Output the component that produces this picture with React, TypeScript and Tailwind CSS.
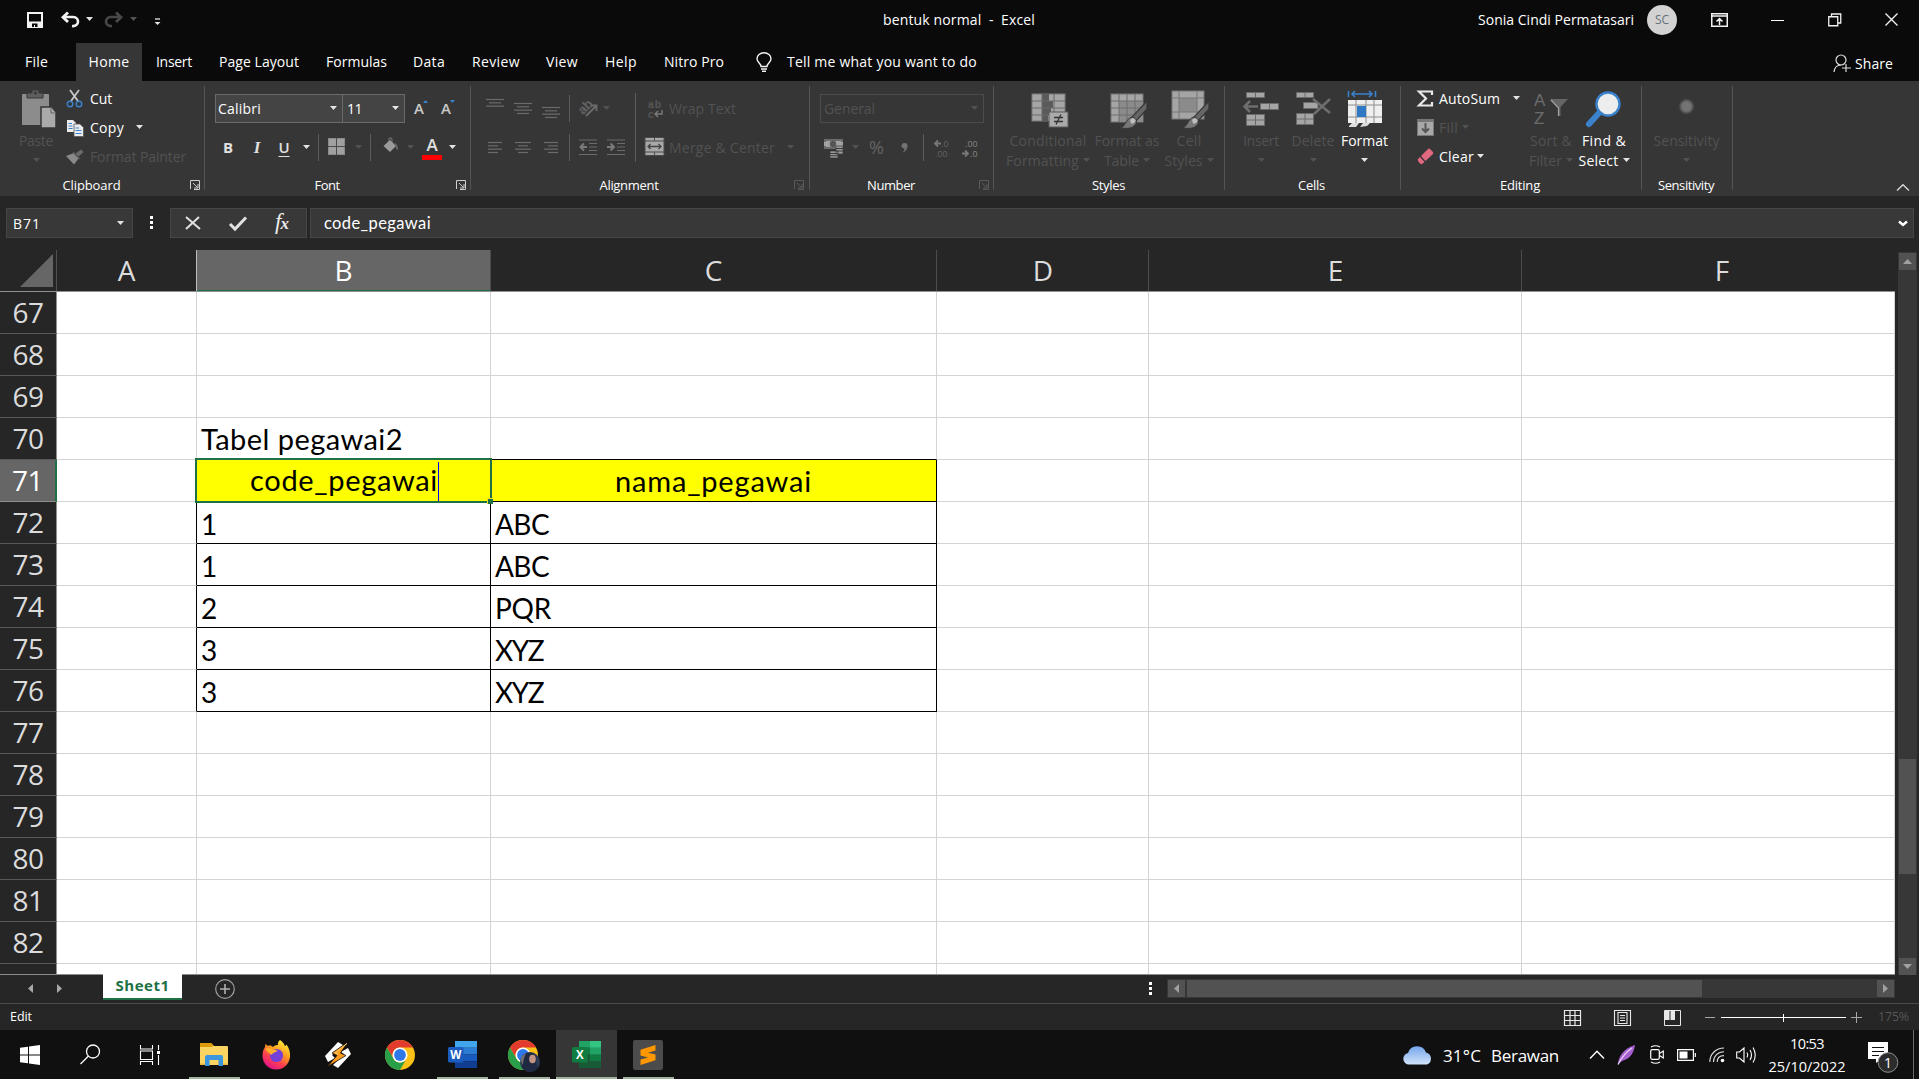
import React, { useLayoutEffect, useRef, useState } from "react";

/* ---------- text that settles into a given width ---------- */
function T({ w, children, className = "" }: { w: number; children: string; className?: string }) {
  const ref = useRef<HTMLSpanElement>(null);
  const [spacing, setSpacing] = useState(0);
  useLayoutEffect(() => {
    const el = ref.current;
    if (!el) return;
    el.style.letterSpacing = "0px";
    const natural = el.getBoundingClientRect().width;
    setSpacing((w - natural) / Math.max(1, children.length));
  }, [w, children]);
  return (
    <span ref={ref} className={"inline-block shrink-0 whitespace-pre " + className} style={{ letterSpacing: `${spacing}px` }}>
      {children}
    </span>
  );
}

type SvgProps = { w: number; h: number; className?: string; children: React.ReactNode };
function S({ w, h, className = "", children }: SvgProps) {
  return (
    <svg width={w} height={h} viewBox={`0 0 ${w} ${h}`} fill="none" className={"shrink-0 overflow-visible " + className}>
      {children}
    </svg>
  );
}

function Caret({ off = false, className = "" }: { off?: boolean; className?: string }) {
  return (
    <S w={7} h={4} className={className}>
      <path d="M0 0H7L3.5 4Z" fill={off ? "#525252" : "#e4e4e4"} />
    </S>
  );
}

const Bar = ({ className = "" }: { className?: string }) => <div className={"w-px shrink-0 bg-[#5c5c5c] " + className} />;

/* ---------- title bar ---------- */
function TitleBar() {
  return (
    <header className="flex h-[43px] items-center pb-[4px]">
      <S w={16} h={16} className="ml-[27px]">
        <path d="M1 1H15V15H1Z" stroke="#f2f2f2" strokeWidth="2" />
        <path d="M2 9.5H14V15H2Z" fill="#f2f2f2" />
        <path d="M5 11.5H10.5V15H8V13H7V15H5Z" fill="#0a0a0a" />
      </S>
      <S w={19} h={16} className="ml-[18px]">
        <path d="M2 5H12C16 5 17 8 17 9.500C17 12.500 14.500 14.500 11 14" stroke="#f2f2f2" strokeWidth="2.600" />
        <path d="M7 0.500L2 5.200L7 10" stroke="#f2f2f2" strokeWidth="2.800" />
      </S>
      <Caret className="ml-[6px] -mt-[1px]" />
      <S w={19} h={16} className="ml-[11px]">
        <path d="M17 5H7C3 5 2 8 2 9.500C2 12.500 4.500 14.500 8 14" stroke="#484848" strokeWidth="2.600" />
        <path d="M12 0.500L17 5.200L12 10" stroke="#484848" strokeWidth="2.800" />
      </S>
      <Caret off className="ml-[7px] -mt-[1px]" />
      <S w={7} h={8} className="ml-[17px] mt-[4px]">
        <path d="M1 1H6" stroke="#e4e4e4" strokeWidth="1.300" />
        <path d="M0.500 4H6.500L3.500 7Z" fill="#e4e4e4" />
      </S>
      <T w={152} className="ml-[722px]">bentuk normal  -  Excel</T>
      <T w={156} className="ml-[443px]">Sonia Cindi Permatasari</T>
      <div className="ml-[13px] flex h-[30px] w-[30px] items-center justify-center rounded-full bg-[#d2d2d2] text-[12px] text-[#667078]">SC</div>
      <S w={17} h={14} className="ml-[34px]">
        <path d="M0.750 0.750H16.250V13.250H0.750ZM1 3H16M8.500 12V6M5.500 8.500L8.500 5.500L11.500 8.500" stroke="#f2f2f2" strokeWidth="1.500" />
      </S>
      <div className="ml-[43px] mt-[2px] h-px w-[13px] bg-white" />
      <S w={14} h={14} className="ml-[44px]">
        <path d="M0.750 3.750H9.750V12.750H0.750ZM3.500 3.500V1H12.750V10H10" stroke="#f2f2f2" strokeWidth="1.300" />
      </S>
      <S w={13} h={13} className="ml-[43px]">
        <path d="M0.500 0.500L12.500 12.500M12.500 0.500L0.500 12.500" stroke="#f2f2f2" strokeWidth="1.400" />
      </S>
    </header>
  );
}

/* ---------- ribbon tabs ---------- */
function Tabs() {
  return (
    <nav className="flex h-[38px] items-center [&>span]:-mt-[2px]">
      <T w={23} className="ml-[25px]">File</T>
      <div className="ml-[28px] flex h-full w-[66px] items-center justify-center bg-[#363636] pb-[2px]">
        <T w={41}>Home</T>
      </div>
      <T w={36} className="ml-[14px]">Insert</T>
      <T w={80} className="ml-[27px]">Page Layout</T>
      <T w={61} className="ml-[27px]">Formulas</T>
      <T w={32} className="ml-[26px]">Data</T>
      <T w={48} className="ml-[27px]">Review</T>
      <T w={32} className="ml-[26px]">View</T>
      <T w={32} className="ml-[27px]">Help</T>
      <T w={60} className="ml-[27px]">Nitro Pro</T>
      <S w={16} h={20} className="ml-[32px]">
        <path d="M5 14.500C5 11.500 1 10.500 1 6.800C1 3.500 4 0.800 8 0.800S15 3.500 15 6.800C15 10.500 11 11.500 11 14.500Z" stroke="#f2f2f2" strokeWidth="1.400" />
        <path d="M5 17H11M6 19.200H10" stroke="#f2f2f2" strokeWidth="1.600" />
      </S>
      <T w={190} className="ml-[15px]">Tell me what you want to do</T>
      <div className="mt-[3px] ml-[856px] flex items-center">
        <S w={18} h={19}>
          <circle cx="8" cy="6" r="5" stroke="#dcdcdc" strokeWidth="1.200" />
          <path d="M1 18C1.500 13.500 4.500 11 8 11M13 10V18M9 14H18" stroke="#dcdcdc" strokeWidth="1.200" />
        </S>
        <T w={38} className="ml-[4px]">Share</T>
      </div>
    </nav>
  );
}

/* ---------- ribbon pieces ---------- */
function Group({ cls, label, lw, labelCls, launch, launchOff, children }: {
  cls: string; label: string; lw: number; labelCls: string; launch?: boolean; launchOff?: boolean; children: React.ReactNode;
}) {
  const c = launchOff ? "#5a5a5a" : "#cfcfcf";
  return (
    <>
      <section className={"flex h-[115px] shrink-0 flex-col " + cls}>
        <div className="h-[93px]">{children}</div>
        <div className="flex h-[22px] items-center text-[13px]">
          <div className={"flex shrink-0 justify-center pt-[2px] " + labelCls}>
            <T w={lw}>{label}</T>
          </div>
          {launch && (
            <S w={10} h={10} className="ml-[7px]">
              <path d="M0.500 9V0.500H9.500V9.500H4M3 3L7.500 7.500M8 4V8H4" stroke={c} />
            </S>
          )}
        </div>
      </section>
      <Bar className="mt-[5px] h-[104px] bg-[#545454]" />
    </>
  );
}

function Big({ cls, icon, a, aw, b, bw, off = true }: {
  cls: string; icon: React.ReactNode; a: string; aw: number; b?: string; bw?: number; off?: boolean;
}) {
  return (
    <div className={"flex shrink-0 flex-col items-center leading-5 " + (off ? "text-[#525252] " : "") + cls}>
      <div className="flex h-[50px] items-start">{icon}</div>
      <T w={aw} className="h-5">{a}</T>
      <div className="flex h-5 items-center gap-[4px]">
        {b && <T w={bw || 0}>{b}</T>}
        <Caret off={off} className="-mt-[2px]" />
      </div>
    </div>
  );
}

function Lines({ rows, className = "" }: { rows: [number, number][]; className?: string }) {
  return (
    <S w={18} h={14} className={"self-start " + className}>
      {rows.map(([x, w], i) => (
        <path key={i} d={`M${x} ${1.5 + i * 3.33}h${w}`} stroke="#6b6b6b" strokeWidth="1.200" />
      ))}
    </S>
  );
}

const Money = () => (
  <S w={20} h={20} className="ml-[14px]">
    <rect x="0" y="1" width="19" height="10" fill="#6b6b6b" />
    <path d="M2 3H17V9H2Z" fill="#a2a2a2" />
    <path d="M0 4V8H2V4ZM17 4V8H19V4Z" fill="#a2a2a2" />
    <circle cx="9" cy="6" r="3.200" fill="#555" />
    <path d="M12 8H19V16H12ZM6 13H14V20H6Z" fill="#9a9a9a" stroke="#363636" strokeWidth=".7" />
    <path d="M12 10.500H19M12 13H19M6 15.500H14M6 17.700H14" stroke="#3a3a3a" />
  </S>
);

const Brush = ({ x, y }: { x: number; y: number }) => (
  <g transform={`translate(${x} ${y})`}>
    <path d="M27 0V8L16 20L11 17Z" fill="#666" stroke="#363636" strokeWidth="1.200" />
    <path d="M0 27C5 27 6 17 12 16C17 17 18 22 14 25C11 28 5 27.500 0 27Z" fill="#777" stroke="#363636" />
    <path d="M10 19C12 16.500 15 17 15.500 19.500C15 22 13 23 11 22.500Z" fill="#bdbdbd" />
  </g>
);

const Conditional = () => (
  <S w={38} h={36} className="mt-[12px] ml-[3px]">
    <rect x="1" y="1" width="33" height="27" fill="#a5a5a5" stroke="#7b7b7b" />
    <path d="M11 1H18V8H22V15H20V22H17V28H11Z" fill="#5a5a5a" />
    <path d="M1 8H34M1 15H34M1 22H34M11 1V28M23 1V28" stroke="#6a6a6a" />
    <rect x="18" y="19" width="19" height="15" fill="#aaa" stroke="#5a5a5a" />
    <path d="M23 24.500H32M23 28.500H32M30 21.500L25 31.500" stroke="#333" strokeWidth="1.300" />
  </S>
);
const TableIcon = () => (
  <S w={38} h={36} className="mt-[12px] ml-[3px]">
    <rect x="1" y="1" width="32" height="28" fill="#a5a5a5" stroke="#777" />
    <path d="M9 8H33V29H9Z" fill="#8b8b8b" />
    <path d="M1 8H33M1 15H33M1 22H33M9 1V29M17 1V29M25 1V29" stroke="#6c6c6c" />
    <Brush x={10} y={8} />
  </S>
);
const CellStyle = () => (
  <S w={38} h={39} className="mt-[9px] ml-[1px]">
    <rect x="1" y="1" width="32" height="28" fill="#a5a5a5" stroke="#777" />
    <rect x="8" y="8" width="18" height="14" fill="#8b8b8b" />
    <path d="M1 8H33M1 22H33M8 1V29M26 1V29" stroke="#777" />
    <Brush x={11} y={11} />
  </S>
);
const InsertIcon = () => (
  <S w={36} h={36} className="mt-[10px]">
    <path d="M3.500 1.500H21.500V6.500H3.500ZM12.500 1.500V6.500M17.500 12.500H35.500V18.500H17.500ZM26.500 12.500V18.500M3.500 23.500H21.500V34.500H3.500ZM12.500 23.500V34.500M3.500 29H21.500" fill="#a5a5a5" stroke="#6a6a6a" />
    <path d="M15 15.500H2M7 10L1.500 15.500L7 21" stroke="#6e6e6e" strokeWidth="2.500" />
  </S>
);
const DeleteIcon = () => (
  <S w={36} h={36} className="mt-[10px]">
    <path d="M1.500 1.500H18.500V6.500H1.500ZM10 1.500V6.500M8.500 11.500H23V17.500H8.500ZM1.500 22.500H18.500V33.500H1.500ZM10 22.500V33.500M1.500 28H18.500" fill="#a5a5a5" stroke="#6a6a6a" />
    <path d="M18 8L35 22M35 8L19 23" stroke="#6e6e6e" strokeWidth="2.500" />
  </S>
);
const FormatIcon = () => (
  <S w={36} h={39} className="mt-[8px]">
    <path d="M1.500 2V8M28.500 2V8M5 5H25M8 2L5 5L8 8M22 2L25 5L22 8" stroke="#3b82cc" strokeWidth="1.600" />
    <rect x="1" y="11" width="34" height="23" fill="#efefef" />
    <path d="M1 16H35M1 28H35M9 11V34M19 11V34M27 11V34" stroke="#8e8e8e" />
    <rect x="10" y="17" width="9" height="11" fill="#2f78c4" />
    <path d="M2 37L5 34H12L9 38H2ZM13 38L16 34H23L20 37Z" fill="#dedede" />
  </S>
);

/* ---------- ribbon ---------- */
function Ribbon() {
  return (
    <div className="flex h-[115px] bg-[#363636] text-white">
      <Group cls="w-[204px]" label="Clipboard" lw={58} labelCls="w-[183px]" launch>
        <div className="flex">
          <div className="ml-[15px] flex w-[42px] flex-col items-center text-[#525252]">
            <S w={36} h={41} className="mt-[8px] ml-[6px]">
              <path d="M1 6Q1 5 2 5H27Q28 5 28 6V36H1Z" fill="#8c8c8c" />
              <path d="M6 4H11V2Q11 1 12 1H17Q18 1 18 2V4H22V9H6Z" fill="#5e5e5e" stroke="#363636" />
              <circle cx="14.500" cy="4" r="1.500" fill="#363636" />
              <path d="M20 18H31L35 23V39H20Z" fill="#aaa" stroke="#363636" strokeWidth="1.500" />
              <path d="M30 18V24H35" stroke="#666" />
            </S>
            <T w={34} className="mt-[1px] leading-5">Paste</T>
            <Caret off className="mt-[7px]" />
          </div>
          <div className="ml-[9px] mt-[3px] flex flex-col">
            <div className="flex h-[29px] items-center">
              <S w={18} h={19}>
                <path d="M4 1L12 12M13 1L5 12" stroke="#c8c8c8" strokeWidth="1.800" />
                <circle cx="4" cy="15" r="2.800" stroke="#3b82cc" strokeWidth="1.400" />
                <circle cx="13" cy="15" r="2.800" stroke="#3b82cc" strokeWidth="1.400" />
              </S>
              <T w={22} className="ml-[6px]">Cut</T>
            </div>
            <div className="flex h-[29px] items-center">
              <S w={18} h={18}>
                <path d="M1 1H7L10 4V13H1Z" fill="#ececec" />
                <path d="M8 5H14L17.500 8.500V17.500H8Z" fill="#ececec" stroke="#555" strokeWidth=".8" />
                <path d="M2.500 4.500H6M2.500 7H6.500M2.500 9.500H6.500M9.500 9H13M9.500 11.500H15.500M9.500 14.500H15.500" stroke="#3b82cc" strokeWidth="1.200" />
              </S>
              <T w={34} className="ml-[6px]">Copy</T>
              <Caret className="ml-[12px] -mt-[2px]" />
            </div>
            <div className="flex h-[29px] items-center text-[#525252]">
              <S w={18} h={16}>
                <path d="M9 5L15 0.500L17.500 3L12 8Z" fill="#6b6b6b" />
                <path d="M0 7L8 4L13 9L8 15.500Z" fill="#8a8a8a" />
                <path d="M7 3L14 10" stroke="#555" strokeWidth="1.500" />
              </S>
              <T w={96} className="ml-[6px]">Format Painter</T>
            </div>
          </div>
        </div>
      </Group>

      <Group cls="w-[265px]" label="Font" lw={25} labelCls="w-[244px]" launch>
        <div className="ml-[10px] mt-[13px] flex h-[29px] items-center">
          <div className="flex h-[29px] w-[128px] items-center justify-between border border-[#6a6a6a] bg-[#444] pl-[2px] pr-[5px]">
            <T w={43}>Calibri</T>
            <Caret className="-mt-[2px]" />
          </div>
          <div className="-ml-px flex h-[29px] w-[63px] items-center justify-between border border-[#6a6a6a] bg-[#444] pl-[4px] pr-[5px]">
            <T w={15}>11</T>
            <Caret className="-mt-[2px]" />
          </div>
          <div className="ml-[9px] flex w-[14px] items-end">
            <span className="text-[15px] font-semibold text-[#c8c8c8]">A</span>
            <S w={5} h={3} className="mb-[17px] -ml-[1px]"><path d="M0 3H5L2.500 0Z" fill="#3b82cc" /></S>
          </div>
          <div className="ml-[13px] flex w-[14px] items-end">
            <span className="text-[15px] font-semibold text-[#c8c8c8]">A</span>
            <S w={5} h={3} className="mb-[17px] -ml-[1px]"><path d="M0 0H5L2.500 3Z" fill="#3b82cc" /></S>
          </div>
        </div>
        <div className="ml-[17px] mt-[11px] flex h-[27px] items-center text-[16px] text-[#e0e0e0]">
          <b className="w-[12px] text-center text-[15px]">B</b>
          <i className="ml-[17px] w-[12px] text-center font-['Liberation_Serif'] text-[17px] font-bold">I</i>
          <span className="ml-[15px] w-[12px] text-center text-[15px] font-semibold underline underline-offset-3">U</span>
          <Caret className="ml-[13px] -mt-[2px]" />
          <Bar className="ml-[8px] h-[27px]" />
          <S w={17} h={17} className="ml-[9px] -mt-[2px]">
            <rect x="0.500" y="0.500" width="16" height="16" fill="#a0a0a0" stroke="#8a8a8a" />
            <path d="M8.500 0V17M0 8.500H17" stroke="#4a4a4a" />
          </S>
          <Caret off className="ml-[10px] -mt-[2px]" />
          <Bar className="ml-[8px] h-[27px]" />
          <S w={16} h={16} className="ml-[12px] -mt-[5px]">
            <path d="M6 7V2Q6 1 7.500 1Q9 1 9 3V6" stroke="#6b6b6b" strokeWidth="1.300" />
            <path d="M7 3L13 9L7 15L0.500 9Z" fill="#9a9a9a" />
            <path d="M11 6Q15 6 15 13Q13 13 12.500 9Z" fill="#666" />
          </S>
          <Caret off className="ml-[8px] -mt-[2px]" />
          <div className="ml-[8px] flex w-[20px] flex-col items-center">
            <span className="h-[19px] text-[17px] leading-[18px] font-semibold">A</span>
            <div className="h-[5px] w-[20px] bg-[#ff0000]" />
          </div>
          <Caret className="ml-[7px] -mt-[2px]" />
        </div>
      </Group>

      <Group cls="w-[338px] text-[#fff]" label="Alignment" lw={59} labelCls="w-[316px]" launch launchOff>
        <div className="flex text-[#525252]">
          <div className="ml-[15px] flex w-[149px] flex-col">
            <div className="mt-[13px] flex h-[29px] items-center">
              <Lines rows={[[0, 18], [3, 12], [0, 18]]} className="mt-[4px]" />
              <Lines rows={[[0, 18], [3, 12], [0, 18], [3, 12]]} className="ml-[10px] mt-[8px]" />
              <Lines rows={[[0, 18], [3, 12], [0, 18], [3, 12]]} className="ml-[10px] mt-[12px]" />
              <Bar className="ml-[9px] h-[27px]" />
              <S w={20} h={20} className="ml-[9px] -mt-[2px]">
                <text x="0" y="14" fontSize="13" fontFamily="Liberation Sans, sans-serif" fontWeight="600" fill="#646464" transform="rotate(-45 6 11)">ab</text>
                <path d="M7 18L17 8M12 7.500H17.500V13" stroke="#6b6b6b" strokeWidth="1.800" />
              </S>
              <Caret off className="ml-[4px] -mt-[2px]" />
            </div>
            <div className="mt-[11px] flex h-[27px] items-center">
              <Lines rows={[[2, 14], [2, 10], [2, 14], [2, 10]]} className="mt-[7px]" />
              <Lines rows={[[1, 16], [4, 10], [1, 16], [4, 10]]} className="ml-[10px] mt-[7px]" />
              <Lines rows={[[2, 14], [6, 10], [2, 14], [6, 10]]} className="ml-[10px] mt-[7px]" />
              <Bar className="ml-[9px] h-[27px]" />
              <S w={18} h={17} className="ml-[9px]">
                <path d="M0 1H18M10 4.500H18M10 8H18M10 11.500H18M0 15.500H18" stroke="#6b6b6b" />
                <path d="M8 8H2M5 4.500L1.500 8L5 11.500" stroke="#7a7a7a" strokeWidth="2" />
              </S>
              <S w={18} h={17} className="ml-[10px]">
                <path d="M0 1H18M10 4.500H18M10 8H18M10 11.500H18M0 15.500H18" stroke="#6b6b6b" />
                <path d="M0 8H6M3.500 4.500L7 8L3.500 11.500" stroke="#7a7a7a" strokeWidth="2" />
              </S>
            </div>
          </div>
          <Bar className="mt-[12px] h-[69px]" />
          <div className="flex flex-col">
            <div className="mt-[13px] flex h-[29px] items-center">
              <S w={18} h={18} className="ml-[11px]">
                <text x="1" y="8" fontSize="10.500" fontFamily="Liberation Sans, sans-serif" fontWeight="600" letterSpacing="1" fill="#565656">ab</text>
                <text x="1" y="18" fontSize="10.500" fontFamily="Liberation Sans, sans-serif" fontWeight="600" fill="#565656">c</text>
                <path d="M15 10V14H8M11 11L8 14L11 17" stroke="#7a7a7a" strokeWidth="1.400" />
              </S>
              <T w={67} className="ml-[4px]">Wrap Text</T>
            </div>
            <div className="mt-[11px] flex h-[27px] items-center">
              <S w={19} h={19} className="ml-[9px] -mt-[2px]">
                <rect width="19" height="19" fill="#a8a8a8" />
                <path d="M0 4H19M0 15H19M9.500 0V4M9.500 15V19M0 .5H19V18.500H0Z" stroke="#4a4a4a" />
                <path d="M3 9.500H16M5.500 7L3 9.500L5.500 12M13.500 7L16 9.500L13.500 12" stroke="#444" strokeWidth="1.300" />
              </S>
              <T w={106} className="ml-[5px]">Merge &amp; Center</T>
              <Caret off className="ml-[12px] -mt-[2px]" />
            </div>
          </div>
        </div>
      </Group>

      <Group cls="w-[183px]" label="Number" lw={48} labelCls="w-[162px]" launch launchOff>
        <div className="ml-[10px] mt-[13px] flex h-[29px] w-[164px] items-center justify-between border border-[#4c4c4c] pl-[3px] pr-[5px] text-[#525252]">
          <T w={51}>General</T>
          <Caret off className="-mt-[2px]" />
        </div>
        <div className="mt-[11px] flex h-[27px] items-center text-[#646464]">
          <Money />
          <Caret off className="ml-[8px] -mt-[2px]" />
          <span className="ml-[10px] w-[16px] text-[18px]">%</span>
          <S w={7} h={10} className="ml-[16px]">
            <path d="M0.500 3A3 3 0 0 1 6.500 3C6.500 6 4 9 1.500 9.500C3 8 3.500 7 3.500 5.500C1.500 5.500 .5 4.500 .5 3Z" fill="#737373" />
          </S>
          <Bar className="ml-[15px] h-[27px]" />
          <S w={16} h={18} className="ml-[10px]">
            <path d="M7 4.500H1M4 1.500L1 4.500L4 7.500" stroke="#777" strokeWidth="1.800" />
            <text x="7" y="8" fontSize="9" fontFamily="Liberation Sans, sans-serif" fill="#606060">.0</text>
            <text x="1" y="18" fontSize="9" fontFamily="Liberation Sans, sans-serif" fill="#606060">.00</text>
          </S>
          <S w={16} h={18} className="ml-[12px]">
            <text x="3" y="8" fontSize="9" fontFamily="Liberation Sans, sans-serif" fill="#808080">.00</text>
            <path d="M0 14.500H6M3 11.500L6 14.500L3 17.500" stroke="#777" strokeWidth="1.800" />
            <text x="8" y="18" fontSize="9" fontFamily="Liberation Sans, sans-serif" fill="#808080">.0</text>
          </S>
        </div>
      </Group>

      <Group cls="w-[230px]" label="Styles" lw={33} labelCls="w-[229px]">
        <div className="flex">
          <Big cls="ml-[12px] w-[84px]" icon={<Conditional />} a="Conditional" aw={77} b="Formatting" bw={73} />
          <Big cls="ml-[1px] w-[72px]" icon={<TableIcon />} a="Format as" aw={65} b="Table" bw={35} />
          <Big cls="w-[52px]" icon={<CellStyle />} a="Cell" aw={25} b="Styles" bw={38} />
        </div>
      </Group>

      <Group cls="w-[175px]" label="Cells" lw={27} labelCls="w-[173px]">
        <div className="flex">
          <Big cls="ml-[11px] w-[50px]" icon={<InsertIcon />} a="Insert" aw={36} />
          <Big cls="ml-[2px] w-[50px]" icon={<DeleteIcon />} a="Delete" aw={43} />
          <Big cls="w-[53px]" icon={<FormatIcon />} a="Format" aw={47} off={false} />
        </div>
      </Group>

      <Group cls="w-[240px]" label="Editing" lw={40} labelCls="w-[238px]">
        <div className="flex">
          <div className="ml-[16px] mt-[3px] flex w-[111px] flex-col">
            <div className="flex h-[29px] items-center">
              <S w={17} h={18}>
                <path d="M15 5V1.500H2L9 8.500L2 15.500H15V12" stroke="#e8e8e8" strokeWidth="2.200" />
              </S>
              <T w={61} className="ml-[5px]">AutoSum</T>
              <Caret className="ml-[13px] -mt-[2px]" />
            </div>
            <div className="flex h-[29px] items-center text-[#525252]">
              <S w={17} h={17}>
                <rect width="17" height="17" fill="#777" />
                <rect x="1" y="3" width="15" height="13" fill="#a8a8a8" />
                <path d="M8.500 4V13M5 9.500L8.500 13L12 9.500" stroke="#555" strokeWidth="2" />
              </S>
              <T w={19} className="ml-[5px]">Fill</T>
              <Caret off className="ml-[4px] -mt-[2px]" />
            </div>
            <div className="flex h-[29px] items-center">
              <S w={17} h={17}>
                <path d="M11 1Q12 0 13 1L16 4Q16.500 5 16 6L8.500 13L4 8Z" fill="#e0687f" />
                <path d="M3 9L7.500 14L5 16Q4 16.500 3 15.500L1 13Q.5 12 1 11Z" fill="#e0687f" />
              </S>
              <T w={35} className="ml-[5px]">Clear</T>
              <Caret className="ml-[3px] -mt-[2px]" />
            </div>
          </div>
          <Big
            cls="w-[46px]"
            icon={
              <S w={36} h={36} className="mt-[8px]">
                <text x="1" y="17" fontSize="17" fontFamily="Liberation Sans, sans-serif" fill="#6b6b6b">A</text>
                <text x="1" y="35" fontSize="17" fontFamily="Liberation Sans, sans-serif" fill="#6b6b6b">Z</text>
                <path d="M17 10H35L27.500 18V27H25V18Z" fill="#666" />
                <path d="M18 11L25.500 19V27" stroke="#a0a0a0" strokeWidth="1.200" />
              </S>
            }
            a="Sort &" aw={42} b="Filter" bw={33}
          />
          <Big
            cls="ml-[5px] w-[50px]"
            icon={
              <S w={36} h={36} className="mt-[10px]">
                <path d="M3 33L14 21" stroke="#3b82cc" strokeWidth="6" strokeLinecap="round" />
                <circle cx="22" cy="13" r="11.500" fill="#ededed" stroke="#3b82cc" strokeWidth="2.400" />
              </S>
            }
            a="Find &" aw={44} b="Select" bw={40} off={false}
          />
        </div>
      </Group>

      <Group cls="w-[90px]" label="Sensitivity" lw={56} labelCls="w-[88px]">
        <Big
          cls="w-[89px]"
          icon={<div className="mt-[19px] -ml-[1px] h-[13px] w-[13px] rounded-full bg-[#737373] blur-[1px]" />}
          a="Sensitivity" aw={66}
        />
      </Group>
      <S w={14} h={7} className="ml-[163px] mt-[103px]">
        <path d="M1 6.500L7 0.800L13 6.500" stroke="#d8d8d8" strokeWidth="1.400" />
      </S>
    </div>
  );
}

/* ---------- formula bar ---------- */
function FormulaBar() {
  return (
    <div className="flex h-[54px] items-start pt-[12px]">
      <div className="ml-[6px] flex h-[30px] w-[127px] items-center justify-between border border-[#464646] bg-[#383838] pl-[6px] pr-[8px]">
        <T w={28}>B71</T>
        <Caret />
      </div>
      <div className="ml-[17px] mt-[8px] flex flex-col gap-[2px]">
        <i className="h-[3px] w-[3px] bg-white" />
        <i className="h-[3px] w-[3px] bg-white" />
        <i className="h-[3px] w-[3px] bg-white" />
      </div>
      <div className="ml-[17px] flex h-[30px] w-[137px] items-center border border-[#464646] bg-[#383838]">
        <S w={16} h={14} className="ml-[14px]">
          <path d="M1 1L15 13M14 1L1 13" stroke="#e2e2e2" strokeWidth="2" />
        </S>
        <S w={18} h={15} className="ml-[28px]">
          <path d="M1 8L6 13L17 1.500" stroke="#e2e2e2" strokeWidth="3" />
        </S>
        <span className="ml-[28px] font-['Liberation_Serif'] text-[23px] leading-[20px] italic text-[#ececec]">
          f<span className="-ml-[1px] text-[17px] font-bold">x</span>
        </span>
      </div>
      <div className="ml-[3px] flex h-[30px] w-[1604px] items-center justify-between border border-[#464646] bg-[#383838] pl-[13px] pr-[5px]">
        <T w={107} className="font-['Lato'] text-[16.500px]">code_pegawai</T>
        <S w={10} h={7}><path d="M1 1.500L5 5L9 1.500" stroke="#fff" strokeWidth="2.400" /></S>
      </div>
    </div>
  );
}

/* ---------- sheet ---------- */
const COLS = [
  { id: "A", w: "w-[140px]", inner: "w-[139px]" },
  { id: "B", w: "w-[294px]", inner: "w-[293px]" },
  { id: "C", w: "w-[446px]", inner: "w-[445px]" },
  { id: "D", w: "w-[212px]", inner: "w-[212px]" },
  { id: "E", w: "w-[373px]", inner: "w-[373px]" },
  { id: "F", w: "w-[373px]", inner: "w-[400px]" },
];
const ROWS = Array.from({ length: 16 }, (_, i) => 67 + i);
const DATA: Record<number, [string, number, string, number]> = {
  72: ["1", 15, "ABC", 54],
  73: ["1", 15, "ABC", 54],
  74: ["2", 15, "PQR", 56],
  75: ["3", 15, "XYZ", 48],
  76: ["3", 15, "XYZ", 48],
};

function cellBorders(row: number, col: string) {
  const inTable = row >= 71 && row <= 76;
  const right = (inTable && "ABC".includes(col)) ? "border-r-black" : "border-r-[#d4d4d4]";
  const bottom = row >= 70 && row <= 76 && "BC".includes(col) ? "border-b-black" : "border-b-[#d4d4d4]";
  return `${right} ${bottom}`;
}

function CellBody({ row, col }: { row: number; col: string }) {
  if (row === 70 && col === "B") return <T w={202} className="ml-[4px] -mt-[2px] text-[29px]">Tabel pegawai2</T>;
  if (row === 71 && col === "B")
    return (
      <>
        <T w={188} className="ml-[53px] -mt-[4px] text-[29px]">code_pegawai</T>
        <div className="h-[39px] w-px bg-[#0000ff]" />
        <div className="absolute -left-[2px] -top-[2px] h-[45px] w-[297px] border-2 border-[#1e7145]" />
        <div className="absolute -right-[3px] -bottom-[3px] h-[6px] w-[6px] border-l border-t border-yellow-300 bg-[#1e7145]" />
      </>
    );
  if (row === 71 && col === "C") return <T w={197} className="mx-auto -mt-[2px] text-[29px]">nama_pegawai</T>;
  const d = DATA[row];
  if (d && col === "B") return <T w={d[1]} className="ml-[4px]">{d[0]}</T>;
  if (d && col === "C") return <T w={d[3]} className="ml-[4px]">{d[2]}</T>;
  return null;
}

function Sheet() {
  return (
    <div className="flex h-[725px]">
      <div className="flex w-[1895px] flex-col overflow-hidden border-b border-[#8c8c8c]">
        <div className="flex h-[42px] shrink-0 border-b border-[#8f8f8f]">
          <div className="flex w-[57px] shrink-0 border-r border-[#505050]">
            <S w={33} h={33} className="ml-[20px] mt-[4px]"><path d="M33 0V33H0Z" fill="#666" /></S>
          </div>
          {COLS.map((c) => (
            <div
              key={c.id}
              className={
                "relative flex h-[41px] shrink-0 overflow-hidden text-[28px] leading-[41px] " + c.w +
                (c.id === "B" ? " border-r border-[#4c4c4c] bg-[#666] text-white" : c.id === "F" ? " text-[#dcdcdc]" : " border-r border-[#4c4c4c] text-[#dcdcdc]") +
                (c.id === "A" ? " border-r-[#bdbdbd]" : "")
              }
            >
              <div className={"shrink-0 text-center " + c.inner}>{c.id}</div>
              {c.id === "B" && <div className="absolute inset-x-0 bottom-0 h-px bg-[#1e7145]" />}
            </div>
          ))}
        </div>
        {ROWS.map((r) => (
          <div key={r} className="flex h-[42px] shrink-0">
            <div
              className={
                "flex w-[57px] shrink-0 justify-center border-b text-[28px] leading-[40px] " +
                (r === 71
                  ? "border-r-2 border-r-[#1e7145] border-b-[#8f8f8f] bg-[#666] text-white"
                  : "border-r border-r-[#8f8f8f] border-b-[#585858] text-[#dcdcdc]")
              }
            >
              <T w={31}>{String(r)}</T>
            </div>
            {COLS.map((c) => (
              <div
                key={c.id}
                className={
                  "relative flex h-[42px] shrink-0 items-center border-r border-b pt-[2px] font-['Lato'] text-[28px] leading-[38px] text-black " +
                  c.w + " " + cellBorders(r, c.id) + (r === 71 && "BC".includes(c.id) ? " bg-[#ffff00]" : " bg-white") +
                  (r === 71 && c.id === "B" ? " z-10" : "")
                }
              >
                <CellBody row={r} col={c.id} />
              </div>
            ))}
          </div>
        ))}
        <div className="flex h-[10px] shrink-0">
          <div className="w-[57px] shrink-0 border-r border-[#8f8f8f]" />
          {COLS.map((c) => (
            <div key={c.id} className={"h-[10px] shrink-0 border-r border-[#d4d4d4] bg-white " + c.w} />
          ))}
        </div>
      </div>
      <div className="ml-[3px] mt-[2px] flex w-[19px] flex-col items-center bg-[#373737] pt-px">
        <div className="flex h-[17px] w-[17px] items-center justify-center bg-[#525252]">
          <S w={9} h={5}><path d="M0 5H9L4.500 0Z" fill="#a0a0a0" /></S>
        </div>
        <div className="mt-[489px] h-[115px] w-[17px] bg-[#525252]" />
        <div className="mt-auto flex h-[17px] w-[17px] items-center justify-center bg-[#525252]">
          <S w={9} h={5}><path d="M0 0H9L4.500 5Z" fill="#a0a0a0" /></S>
        </div>
      </div>
    </div>
  );
}

function SheetTabs() {
  return (
    <div className="flex h-[29px] items-start border-b border-[#4a4a4a]">
      <S w={5} h={9} className="ml-[28px] mt-[9px]"><path d="M5 0V9L0 4.500Z" fill="#a8a8a8" /></S>
      <S w={5} h={9} className="ml-[24px] mt-[9px]"><path d="M0 0V9L5 4.500Z" fill="#a8a8a8" /></S>
      <div className="ml-[41px] -mt-px flex h-[26px] w-[79px] justify-center border-b-2 border-[#1e7145] bg-white text-[15px] leading-[22px] font-bold text-[#1e7145]">
        <T w={54}>Sheet1</T>
      </div>
      <S w={20} h={20} className="ml-[33px] mt-[4px]">
        <circle cx="10" cy="10" r="9.300" stroke="#a0a0a0" strokeWidth="1.200" />
        <path d="M5 10H15M10 5V15" stroke="#b0b0b0" strokeWidth="1.600" />
      </S>
      <div className="ml-[914px] mt-[7px] flex flex-col gap-[2px]">
        <i className="h-[3px] w-[3px] bg-white" />
        <i className="h-[3px] w-[3px] bg-white" />
        <i className="h-[3px] w-[3px] bg-white" />
      </div>
      <div className="ml-[15px] mt-[4px] flex h-[19px] w-[728px] items-center bg-[#373737] px-px">
        <div className="flex h-[17px] w-[17px] items-center justify-center bg-[#525252]">
          <S w={5} h={9}><path d="M5 0V9L0 4.500Z" fill="#a0a0a0" /></S>
        </div>
        <div className="ml-[2px] h-[17px] w-[515px] bg-[#525252]" />
        <div className="ml-auto flex h-[17px] w-[17px] items-center justify-center bg-[#525252]">
          <S w={5} h={9}><path d="M0 0V9L5 4.500Z" fill="#a0a0a0" /></S>
        </div>
      </div>
    </div>
  );
}

function StatusBar() {
  return (
    <div className="flex h-[26px] items-center pt-px text-[12.500px]">
      <T w={22} className="ml-[10px]">Edit</T>
      <S w={17} h={16} className="ml-[1532px]">
        <path d="M0.500 0.500H16.500V15.500H0.500ZM0 5.500H17M0 10.500H17M6 0V16M11 0V16" stroke="#e8e8e8" strokeWidth="1.200" />
      </S>
      <S w={17} h={16} className="ml-[33px]">
        <path d="M0.500 0.500H16.500V15.500H0.500ZM4 2.500H13V13.500H4ZM6 5.500H11M6 8H11M6 10.500H11" stroke="#e8e8e8" strokeWidth="1.100" />
      </S>
      <S w={17} h={16} className="ml-[33px]">
        <path d="M0.500 0.500H16.500V15.500H0.500Z" stroke="#e8e8e8" />
        <path d="M1 1H5.500V10H1ZM6.500 1H11V10H6.500Z" fill="#e8e8e8" />
      </S>
      <div className="ml-[24px] h-px w-[10px] bg-[#a8a8a8]" />
      <div className="ml-[6px] flex w-[125px] items-center">
        <div className="h-px w-[62px] bg-white" />
        <div className="h-[8px] w-px bg-white" />
        <div className="h-px w-[62px] bg-white" />
      </div>
      <S w={11} h={11} className="ml-[5px]"><path d="M0 5.500H11M5.500 0V11" stroke="#a8a8a8" /></S>
      <T w={31} className="ml-[16px] text-[#565656]">175%</T>
    </div>
  );
}

/* ---------- taskbar ---------- */
const Chrome = ({ children, w = 30 }: { children?: React.ReactNode; w?: number }) => (
  <S w={w} h={32}>
    <circle cx="15" cy="15" r="15" fill="#fbc116" />
    <path d="M2 7.500A15 15 0 0 1 28 7.500H15A7.500 7.500 0 0 0 8.500 18.800Z" fill="#e33b2e" />
    <path d="M2 7.500A15 15 0 0 0 15 30L21.500 18.800A7.500 7.500 0 0 1 8.500 18.800Z" fill="#2a9f4a" />
    <circle cx="15" cy="15" r="7.500" fill="#fff" />
    <circle cx="15" cy="15" r="5.900" fill="#2f78ea" />
    {children}
  </S>
);

function Task({ cls = "", on, active, children }: { cls?: string; on?: boolean; active?: boolean; children: React.ReactNode }) {
  return (
    <div className={"flex h-[49px] shrink-0 flex-col items-center " + (active ? "bg-[#363636] " : "") + cls}>
      <div className="flex h-[47px] items-center pt-[2px] pr-[1px]">{children}</div>
      {on && <div className="h-[2px] w-full bg-[#a3b5a0]" />}
    </div>
  );
}

function Office({ c, bg, letter }: { c: string[]; bg: string; letter: string }) {
  return (
    <S w={29} h={27}>
      <path d="M7 0H29V6.750H7Z" fill={c[0]} />
      <path d="M7 6.750H29V13.500H7Z" fill={c[1]} />
      <path d="M7 13.500H29V20.250H7Z" fill={c[2]} />
      <path d="M7 20.250H29V27H7Z" fill={c[3]} />
      {letter === "X" && <path d="M18 0H29V6.750H18Z" fill="#33c481" />}
      {letter === "X" && <path d="M18 6.750H29V13.500H18Z" fill="#21a366" />}
      {letter === "X" && <path d="M7 13.500H18V20.250H7Z" fill="#185c37" />}
      <rect x="0" y="6" width="15.500" height="15.500" rx="1.500" fill={bg} />
      <text x="7.750" y="18" fontSize="11.500" fontWeight="700" textAnchor="middle" fontFamily="Open Sans, sans-serif" fill="#fff">{letter}</text>
    </S>
  );
}

function Taskbar() {
  return (
    <footer className="flex h-[49px] items-center bg-[#101010]">
      <S w={20} h={20} className="ml-[20px]">
        <path d="M0 2.800L8 1.700V9.400H0ZM9 1.500L20 0V9.400H9ZM0 10.400H8V18.200L0 17.200ZM9 10.400H20V20L9 18.400Z" fill="#fff" />
      </S>
      <S w={20} h={21} className="ml-[40px]">
        <circle cx="13" cy="7.500" r="6.500" stroke="#fff" strokeWidth="1.300" />
        <path d="M8.500 12L0.500 20" stroke="#fff" strokeWidth="1.300" />
      </S>
      <S w={20} h={20} className="ml-[40px]">
        <path d="M0.500 0V4H12.500V0M0.500 6H12.500V14.500H0.500ZM0.500 20V16.500H12.500V20M18.500 0V5M18.500 10V20" stroke="#fff" strokeWidth="1.100" />
        <rect x="17" y="6" width="3" height="3" fill="#fff" />
      </S>
      <Task cls="ml-[29px] w-[51px]" on>
        <S w={28} h={24}>
          <path d="M0 1Q0 0 1 0H11L14 3H27Q28 3 28 4V22H0Z" fill="#fcd462" />
          <path d="M0 1Q0 0 1 0H11L13.500 2.500L12 4H0Z" fill="#dd9b0a" />
          <path d="M5 14Q5 12 7 12H21Q23 12 23 14V23H18.500V17H9.500V23H5Z" fill="#3b96dd" />
          <path d="M0 20.500H5V22H0ZM23 20.500H28V22H23Z" fill="#efb63c" />
        </S>
      </Task>
      <Task cls="ml-[11px] w-[51px]">
        <S w={29} h={30}>
          <defs>
            <linearGradient id="fx" x1="24" y1="2" x2="8" y2="28" gradientUnits="userSpaceOnUse">
              <stop offset="0" stopColor="#fff03c" />
              <stop offset=".4" stopColor="#ff9a1f" />
              <stop offset=".7" stopColor="#ff3f4f" />
              <stop offset="1" stopColor="#e31587" />
            </linearGradient>
          </defs>
          <path d="M18 0C21 2 22 4 23 6C24 6 24 5 24.500 4.500C27 8 28.500 12 28 17C27 25 21 29.500 14.500 29.500C6 29.500 .5 23 .5 16C.5 12 1.500 9 3 7L3.500 4L6 6C8 5 10 6 11 7C13 5 15 5 16 5C15.500 3 16.500 1 18 0Z" fill="url(#fx)" />
          <circle cx="14.500" cy="15.500" r="6.600" fill="#7440d8" />
          <path d="M3.500 9C6 7 9 8 11 9.500C13 9.500 15 10 15.500 11C13 12.500 10.500 13 9.500 15C8 13 5 12 3.500 9Z" fill="#ffb02a" />
        </S>
      </Task>
      <Task cls="ml-[11px] w-[51px]">
        <S w={28} h={28}>
          <path d="M14 1L19 4L8 14L11 17L4 21L1 15Z" fill="#fff" />
          <path d="M14 27L9 24L20 13L17 11L24 7L27 13Z" fill="#fff" />
          <path d="M24 1L8 12L13 14.500L3 26L22 14.500L16.500 12Z" fill="#ff9c1c" stroke="#101010" strokeWidth=".8" />
          <path d="M23 2.500L11 12L14 13" stroke="#ffcf6a" />
        </S>
      </Task>
      <Task cls="ml-[11px] w-[51px]"><div className="pt-[2px]"><Chrome /></div></Task>
      <Task cls="ml-[11px] w-[51px]" on>
        <Office c={["#41a5ee", "#2b7cd3", "#185abd", "#103f91"]} bg="#1b5cbe" letter="W" />
      </Task>
      <Task cls="ml-[11px] w-[51px]" on>
        <div className="pt-[2px]">
          <Chrome w={32}>
            <circle cx="22" cy="22" r="10" fill="#2b3a56" />
            <path d="M14 28C13 20 16 12.500 22 12.500C27 12.500 29 17 28 22L30 28A10 10 0 0 1 14 28Z" fill="#1f2a42" />
            <ellipse cx="24.500" cy="19" rx="3.300" ry="4.300" fill="#c29482" />
            <path d="M13 18A10 10 0 0 1 18 13.500C16 17 15 21 15 25A10 10 0 0 1 13 18Z" fill="#77716d" />
          </Chrome>
        </div>
      </Task>
      <Task cls="ml-[6px] w-[61px]" on active>
        <Office c={["#21a366", "#107c41", "#107c41", "#185c37"]} bg="#107c41" letter="X" />
      </Task>
      <Task cls="ml-[6px] w-[51px]" on>
        <S w={30} h={30}>
          <rect width="30" height="30" rx="2" fill="#4b4b4b" />
          <path d="M22.500 5L7.500 9.700V15.500L15 17.500L7.500 19.500V25L22.500 20.300V14.500L15 12.700L22.500 10.600Z" fill="#ff9800" />
        </S>
      </Task>

      <S w={30} h={20} className="ml-[729px]">
        <defs>
          <linearGradient id="cl" x1="0" y1="0" x2="0" y2="20" gradientUnits="userSpaceOnUse">
            <stop offset="0" stopColor="#6ea0ea" />
            <stop offset="1" stopColor="#d5e5fb" />
          </linearGradient>
        </defs>
        <path d="M6 19.500A5.800 5.800 0 0 1 5 8A9.500 9.500 0 0 1 23 7.500A6.300 6.300 0 0 1 24 19.500Z" fill="url(#cl)" />
      </S>
      <T w={38} className="ml-[10px] mt-[2px] text-[17px]">31°C</T>
      <T w={68} className="ml-[10px] mt-[2px] text-[17px]">Berawan</T>
      <S w={16} h={9} className="ml-[30px]"><path d="M1 8.500L8 1.200L15 8.500" stroke="#fff" strokeWidth="1.400" /></S>
      <S w={18} h={20} className="ml-[12px]">
        <path d="M18 0C17 8 13 14 5 16L1 19.500C1 12 7 3 18 0Z" fill="#a65fd0" />
        <path d="M1 19.500C5 12 9 7 15 3" stroke="#e9d2f5" strokeWidth="1.300" />
      </S>
      <S w={14} h={19} className="ml-[15px]">
        <rect x="0.700" y="4.700" width="8.600" height="9.600" rx="1.500" stroke="#fff" strokeWidth="1.200" />
        <path d="M9.500 8.500L13.300 6V13L9.500 10.500M1 2Q5.500 -.5 10 2M1 17Q5.500 19.500 10 17" stroke="#fff" strokeWidth="1.100" />
      </S>
      <S w={19} h={12} className="ml-[13px]">
        <path d="M0.600 0.600H16.400V11.400H0.600ZM18.300 4V8" stroke="#fff" strokeWidth="1.200" />
        <rect x="2.500" y="2.500" width="8" height="7" fill="#fff" />
      </S>
      <S w={16} h={16} className="ml-[13px]">
        <path d="M0.800 15C.8 7 7 1 15 1M4.500 15C4.500 9 9 4.800 15 4.800M8.200 15C8.200 11 11 8.600 15 8.600" stroke="#ddd" strokeWidth="1.100" />
        <circle cx="13.500" cy="13.500" r="1.800" fill="#fff" />
      </S>
      <S w={21} h={18} className="ml-[11px]">
        <path d="M0.700 6H3.500L8 2V16L3.500 12H0.700ZM11 6.500Q12.500 9 11 11.500M14 4Q17 9 14 14M17 1.500Q21.500 9 17 16.500" stroke="#fff" strokeWidth="1.100" />
      </S>
      <div className="ml-[11px] flex w-[78px] flex-col items-center text-[14.500px] leading-[23px]">
        <T w={34}>10:53</T>
        <T w={77}>25/10/2022</T>
      </div>
      <S w={31} h={31} className="ml-[22px] mt-[6px]">
        <path d="M0 0H20V17H13L8 21V17H0Z" fill="#fff" />
        <path d="M4 5.500H16M4 9.500H16M4 13.500H11" stroke="#101010" strokeWidth="1.200" />
        <circle cx="20" cy="20.500" r="9.800" fill="#2c2c2c" stroke="#8e8e8e" />
        <text x="20" y="25.500" fontSize="14" textAnchor="middle" fontFamily="Open Sans, sans-serif" fill="#fff">1</text>
      </S>
      <div className="ml-[14px] h-[49px] w-px bg-[#6a6a6a]" />
    </footer>
  );
}

export default function App() {
  return (
    <div className="flex h-[1079px] w-[1919px] flex-col overflow-hidden bg-[#262626] font-['Open_Sans',sans-serif] text-[14px] text-white">
      <div className="bg-[#0a0a0a]">
        <TitleBar />
        <Tabs />
      </div>
      <Ribbon />
      <FormulaBar />
      <Sheet />
      <SheetTabs />
      <StatusBar />
      <Taskbar />
    </div>
  );
}
